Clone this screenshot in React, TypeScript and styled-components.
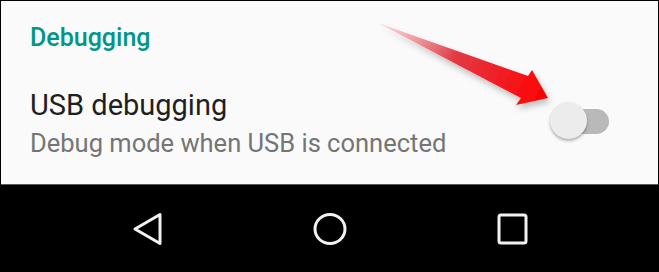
import React from 'react';
import styled, { createGlobalStyle } from 'styled-components';

const Global = createGlobalStyle`
  html, body {
    margin: 0;
    padding: 0;
    background: #000;
  }
  body {
    font-family: Roboto, "Noto Sans", sans-serif;
  }
`;

const Screen = styled.div`
  position: relative;
  width: 659px;
  height: 272px;
  display: flex;
  flex-direction: column;
  background: #000;
  overflow: hidden;
`;

const Panel = styled.section`
  height: 183px;
  margin: 1px 1px 0 1px;
  background: #fafafa;
  border-bottom: 1px solid #5c5c5c;
  display: flex;
  flex-direction: column;
  padding-left: 29px;
`;

const Category = styled.h2`
  margin: 0;
  padding-top: 22px;
  font-size: 25px;
  font-weight: 500;
  color: #009688;
  line-height: 30px;
`;

const Row = styled.div`
  display: flex;
  align-items: center;
  justify-content: space-between;
  padding-right: 49px;
  margin-top: 32px;
`;

const Texts = styled.div`
  display: flex;
  flex-direction: column;
`;

const Title = styled.div`
  font-size: 29px;
  line-height: 40px;
  color: #1f1f1f;
`;

const Summary = styled.div`
  font-size: 25.5px;
  line-height: 36px;
  color: #757575;
`;

const Switch = styled.div`
  position: relative;
  width: 59px;
  height: 38px;
  margin-bottom: 4px;
  display: flex;
  align-items: center;
  justify-content: flex-end;
`;

const Track = styled.div`
  width: 54px;
  height: 25px;
  border-radius: 13px;
  background: #b9b9b9;
`;

const Thumb = styled.div`
  position: absolute;
  left: 0;
  top: 0;
  width: 37px;
  height: 37px;
  border-radius: 50%;
  background: #ececec;
  box-shadow: 0 2px 3px rgba(0, 0, 0, 0.3);
`;

const NavBar = styled.nav`
  flex: 1;
  display: flex;
  align-items: center;
  justify-content: space-between;
  padding: 0 126px 0 127px;
  background: #000;
`;

const NavButton = styled.div`
  width: 40px;
  height: 40px;
  display: flex;
  align-items: center;
  justify-content: center;
`;

const Pointer = styled.svg`
  position: absolute;
  left: 0;
  top: 0;
  pointer-events: none;
`;

const App: React.FC = () => {
  return (
    <Screen>
      <Global />
      <Panel>
        <Category>Debugging</Category>
        <Row>
          <Texts>
            <Title>USB debugging</Title>
            <Summary>Debug mode when USB is connected</Summary>
          </Texts>
          <Switch>
            <Track />
            <Thumb />
          </Switch>
        </Row>
      </Panel>
      <NavBar>
        <NavButton>
          <svg width="34" height="36" viewBox="0 0 34 36">
            <path d="M5 18 L30 3.5 L30 32.5 Z" fill="none" stroke="#f2f2f2" strokeWidth="3" strokeLinejoin="round" />
          </svg>
        </NavButton>
        <NavButton>
          <svg width="36" height="36" viewBox="0 0 36 36">
            <ellipse cx="18" cy="18" rx="15" ry="14.5" fill="none" stroke="#f2f2f2" strokeWidth="3" />
          </svg>
        </NavButton>
        <NavButton>
          <svg width="34" height="34" viewBox="0 0 34 34">
            <rect x="3" y="3" width="27" height="28" rx="2" fill="none" stroke="#f2f2f2" strokeWidth="3" />
          </svg>
        </NavButton>
      </NavBar>
      <Pointer width="659" height="272" viewBox="0 0 659 272">
        <defs>
          <linearGradient id="arrowFill" x1="378" y1="24" x2="548" y2="98" gradientUnits="userSpaceOnUse">
            <stop offset="0" stopColor="#f4b0b4" stopOpacity="0.4" />
            <stop offset="0.45" stopColor="#e23a44" />
            <stop offset="1" stopColor="#ff0000" />
          </linearGradient>
          <filter id="arrowShadow" x="-20%" y="-20%" width="140%" height="160%">
            <feDropShadow dx="2" dy="4" stdDeviation="3" floodColor="#000" floodOpacity="0.25" />
          </filter>
        </defs>
        <path
          d="M378 23 L528 76 L532 70 L548 98 L516 105 L521 98 Z"
          fill="url(#arrowFill)"
          filter="url(#arrowShadow)"
        />
      </Pointer>
    </Screen>
  );
};

export default App;
